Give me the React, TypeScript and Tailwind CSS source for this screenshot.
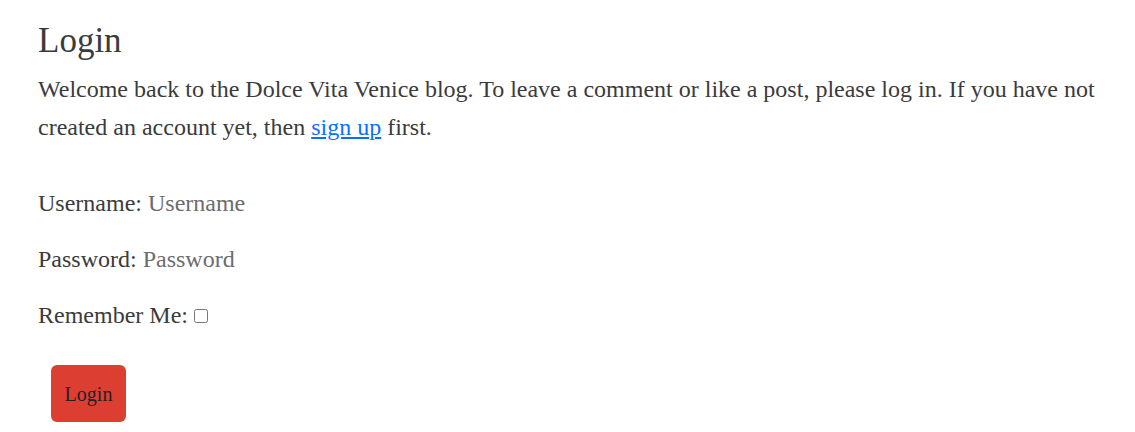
export default function App() {
    return (
        <div className="min-h-[432px] bg-white px-[38px] pt-[20px] text-[#3b3b3b]" style={{ fontFamily: '"Liberation Serif", "Times New Roman", serif' }}>
            <h1 className="text-[35px] leading-[42px] mb-[8px]">Login</h1>
            <p className="text-[24px] leading-[38px] mb-[38px]">
                Welcome back to the Dolce Vita Venice blog. To leave a comment or like a post, please log in. If you have not created an account yet, then{' '}
                <a href="#" className="text-[#0d6efd] underline">sign up</a> first.
            </p>
            <form className="text-[24px]" onSubmit={(e) => e.preventDefault()}>
                <p className="leading-[38px] mb-[18px]">
                    <label htmlFor="id_login">Username:</label>{' '}
                    <input id="id_login" type="text" placeholder="Username" className="outline-none bg-transparent placeholder:text-[#6c6c6c] w-[220px]" />
                </p>
                <p className="leading-[38px] mb-[18px]">
                    <label htmlFor="id_password">Password:</label>{' '}
                    <input id="id_password" type="password" placeholder="Password" className="outline-none bg-transparent placeholder:text-[#6c6c6c] w-[220px]" />
                </p>
                <p className="leading-[38px] mb-[31px] flex items-center gap-[6px]">
                    <label htmlFor="id_remember">Remember Me:</label>
                    <input id="id_remember" type="checkbox" className="w-[14px] h-[14px] mt-[2px]" />
                </p>
                <button type="submit" className="ml-[13px] w-[75px] h-[57px] rounded-[6px] bg-[#dc3f32] text-[20px] text-[#222]">
                    Login
                </button>
            </form>
        </div>
    );
}
